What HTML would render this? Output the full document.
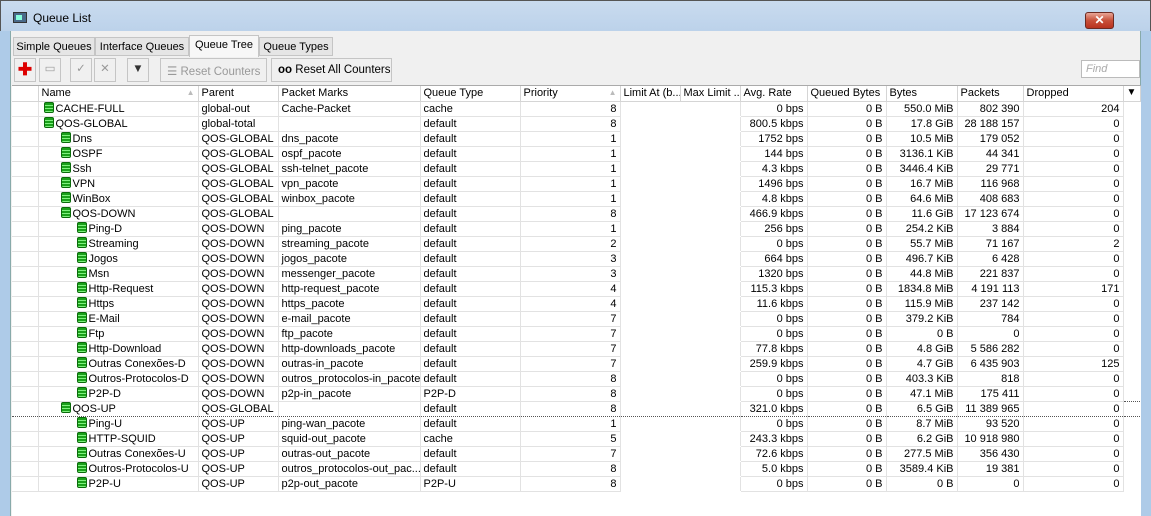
<!DOCTYPE html>
<html><head><meta charset="utf-8"><style>
*{box-sizing:border-box;margin:0;padding:0}
body{width:1151px;height:516px;overflow:hidden;background:#aecbe8;font-family:"Liberation Sans",sans-serif;font-size:11px;color:#000;position:relative}
.title{position:absolute;left:0;top:0;width:1151px;height:31px;background:linear-gradient(#c9dbef,#bcd2ea);border:1px solid #555;border-bottom:none}
.title span{position:absolute;left:32px;top:10px;font-size:12px}
.ticon{position:absolute;left:12px;top:11px;width:14px;height:11px;background:#4a6a8a;border:1px solid #333}
.ticon:after{content:"";position:absolute;left:2px;top:2px;width:6px;height:5px;background:#8fd}
.close{position:absolute;left:1084px;top:11px;width:29px;height:17px;border:1px solid #6b2a22;border-radius:3px;background:linear-gradient(#e8a596,#c8503a 50%,#b8321e);color:#fff;font-weight:bold;text-align:center;line-height:15px;font-size:12px}
.win{position:absolute;left:10px;top:31px;width:1131px;height:485px;background:#f0f0f0;border-left:1px solid #8aa;border-right:1px solid #8aa}
.tabs{position:absolute;left:2px;top:4px;height:20px}
.tab{position:absolute;top:2px;height:19px;border:1px solid #c5c5c5;background:#e5e5e5;font-size:11px;padding:3px 0 0;text-align:center;white-space:nowrap}
.tab.sel{top:0;height:22px;background:#f7f7f7;border-bottom:none;padding-top:3px}
.tb{position:absolute;top:27px;height:24px;border:1px solid #c5c5c5;background:#f0f0f0;color:#999;font-size:11.5px;padding:5px 6px 0;white-space:nowrap;text-align:center}
.find{position:absolute;left:1070px;top:29px;width:59px;height:18px;background:#fff;border:1px solid #bbb;color:#aaa;font-style:italic;padding:2px 4px}
.grid{position:absolute;left:1px;top:54px;width:1129px;height:431px;background:#fff;border-top:1px solid #aaa}
table{border-collapse:collapse;table-layout:fixed;position:absolute;left:0;top:0;width:1128px}
td{height:15px;line-height:14px;white-space:nowrap;overflow:hidden;border-right:1px solid #e2e2e2;border-bottom:1px solid #e2e2e2;padding:0 3px;font-size:11px}
tr.h td{border-right:1px solid #d5d5d5;border-bottom:1px solid #d5d5d5;height:15px}
tr:not(.h) td:nth-child(7),tr:not(.h) td:nth-child(8){border-bottom-color:#fff}
tr:not(.h) td:nth-child(7){border-right-color:#fff}
td.r{text-align:right}
td.e{border-right:none;border-bottom:none}
tr.sel td{border-top:1px dotted #555;border-bottom:1px dotted #555 !important}
.ic{display:inline-block;width:10px;height:11px;vertical-align:-1px;margin-right:2px;background:repeating-linear-gradient(#1aa01a 0 2px,#7ef07e 2px 3px);border:1px solid #0a6a0a;border-radius:2px}
</style></head><body>
<div class="title"><div class="ticon"></div><span>Queue List</span><div class="close">✕</div></div>
<div class="win">
<div class="tabs">
<div class="tab" style="left:0;width:82px">Simple Queues</div>
<div class="tab" style="left:82px;width:94px">Interface Queues</div>
<div class="tab sel" style="left:176px;width:70px">Queue Tree</div>
<div class="tab" style="left:246px;width:74px">Queue Types</div>
</div>
<div class="tb" style="left:3px;width:22px;color:#d00;font-weight:bold;font-size:17px;padding:0;line-height:21px">✚</div>
<div class="tb" style="left:28px;width:22px;padding:0;line-height:20px">▭</div>
<div class="tb" style="left:59px;width:22px;padding:0;line-height:20px">✓</div>
<div class="tb" style="left:83px;width:22px;padding:0;line-height:20px">✕</div>
<div class="tb" style="left:116px;width:22px;color:#333;padding:0;line-height:20px">▼</div>
<div class="tb" style="left:149px;width:107px">☰ Reset Counters</div>
<div class="tb" style="left:260px;width:121px;color:#000"><b>oo</b> Reset All Counters</div>
<div class="find">Find</div>
<div class="grid">
<table>
<colgroup><col style="width:26px"><col style="width:160px"><col style="width:80px"><col style="width:142px"><col style="width:100px"><col style="width:100px"><col style="width:60px"><col style="width:60px"><col style="width:67px"><col style="width:79px"><col style="width:71px"><col style="width:66px"><col style="width:100px"><col style="width:17px"></colgroup>
<tr class="h"><td></td><td>Name<span style="float:right;color:#bbb;font-size:8px">▲</span></td><td>Parent</td><td>Packet Marks</td><td>Queue Type</td><td>Priority<span style="float:right;color:#bbb;font-size:8px">▲</span></td><td>Limit At (b...</td><td>Max Limit ...</td><td>Avg. Rate</td><td>Queued Bytes</td><td>Bytes</td><td>Packets</td><td>Dropped</td><td style="font-size:10px">▼</td></tr>
<tr><td></td><td style="padding-left:5px"><i class="ic"></i>CACHE-FULL</td><td>global-out</td><td>Cache-Packet</td><td>cache</td><td class="r">8</td><td></td><td></td><td class="r">0 bps</td><td class="r">0 B</td><td class="r">550.0 MiB</td><td class="r">802 390</td><td class="r">204</td><td class="e"></td></tr>
<tr><td></td><td style="padding-left:5px"><i class="ic"></i>QOS-GLOBAL</td><td>global-total</td><td></td><td>default</td><td class="r">8</td><td></td><td></td><td class="r">800.5 kbps</td><td class="r">0 B</td><td class="r">17.8 GiB</td><td class="r">28 188 157</td><td class="r">0</td><td class="e"></td></tr>
<tr><td></td><td style="padding-left:22px"><i class="ic"></i>Dns</td><td>QOS-GLOBAL</td><td>dns_pacote</td><td>default</td><td class="r">1</td><td></td><td></td><td class="r">1752 bps</td><td class="r">0 B</td><td class="r">10.5 MiB</td><td class="r">179 052</td><td class="r">0</td><td class="e"></td></tr>
<tr><td></td><td style="padding-left:22px"><i class="ic"></i>OSPF</td><td>QOS-GLOBAL</td><td>ospf_pacote</td><td>default</td><td class="r">1</td><td></td><td></td><td class="r">144 bps</td><td class="r">0 B</td><td class="r">3136.1 KiB</td><td class="r">44 341</td><td class="r">0</td><td class="e"></td></tr>
<tr><td></td><td style="padding-left:22px"><i class="ic"></i>Ssh</td><td>QOS-GLOBAL</td><td>ssh-telnet_pacote</td><td>default</td><td class="r">1</td><td></td><td></td><td class="r">4.3 kbps</td><td class="r">0 B</td><td class="r">3446.4 KiB</td><td class="r">29 771</td><td class="r">0</td><td class="e"></td></tr>
<tr><td></td><td style="padding-left:22px"><i class="ic"></i>VPN</td><td>QOS-GLOBAL</td><td>vpn_pacote</td><td>default</td><td class="r">1</td><td></td><td></td><td class="r">1496 bps</td><td class="r">0 B</td><td class="r">16.7 MiB</td><td class="r">116 968</td><td class="r">0</td><td class="e"></td></tr>
<tr><td></td><td style="padding-left:22px"><i class="ic"></i>WinBox</td><td>QOS-GLOBAL</td><td>winbox_pacote</td><td>default</td><td class="r">1</td><td></td><td></td><td class="r">4.8 kbps</td><td class="r">0 B</td><td class="r">64.6 MiB</td><td class="r">408 683</td><td class="r">0</td><td class="e"></td></tr>
<tr><td></td><td style="padding-left:22px"><i class="ic"></i>QOS-DOWN</td><td>QOS-GLOBAL</td><td></td><td>default</td><td class="r">8</td><td></td><td></td><td class="r">466.9 kbps</td><td class="r">0 B</td><td class="r">11.6 GiB</td><td class="r">17 123 674</td><td class="r">0</td><td class="e"></td></tr>
<tr><td></td><td style="padding-left:38px"><i class="ic"></i>Ping-D</td><td>QOS-DOWN</td><td>ping_pacote</td><td>default</td><td class="r">1</td><td></td><td></td><td class="r">256 bps</td><td class="r">0 B</td><td class="r">254.2 KiB</td><td class="r">3 884</td><td class="r">0</td><td class="e"></td></tr>
<tr><td></td><td style="padding-left:38px"><i class="ic"></i>Streaming</td><td>QOS-DOWN</td><td>streaming_pacote</td><td>default</td><td class="r">2</td><td></td><td></td><td class="r">0 bps</td><td class="r">0 B</td><td class="r">55.7 MiB</td><td class="r">71 167</td><td class="r">2</td><td class="e"></td></tr>
<tr><td></td><td style="padding-left:38px"><i class="ic"></i>Jogos</td><td>QOS-DOWN</td><td>jogos_pacote</td><td>default</td><td class="r">3</td><td></td><td></td><td class="r">664 bps</td><td class="r">0 B</td><td class="r">496.7 KiB</td><td class="r">6 428</td><td class="r">0</td><td class="e"></td></tr>
<tr><td></td><td style="padding-left:38px"><i class="ic"></i>Msn</td><td>QOS-DOWN</td><td>messenger_pacote</td><td>default</td><td class="r">3</td><td></td><td></td><td class="r">1320 bps</td><td class="r">0 B</td><td class="r">44.8 MiB</td><td class="r">221 837</td><td class="r">0</td><td class="e"></td></tr>
<tr><td></td><td style="padding-left:38px"><i class="ic"></i>Http-Request</td><td>QOS-DOWN</td><td>http-request_pacote</td><td>default</td><td class="r">4</td><td></td><td></td><td class="r">115.3 kbps</td><td class="r">0 B</td><td class="r">1834.8 MiB</td><td class="r">4 191 113</td><td class="r">171</td><td class="e"></td></tr>
<tr><td></td><td style="padding-left:38px"><i class="ic"></i>Https</td><td>QOS-DOWN</td><td>https_pacote</td><td>default</td><td class="r">4</td><td></td><td></td><td class="r">11.6 kbps</td><td class="r">0 B</td><td class="r">115.9 MiB</td><td class="r">237 142</td><td class="r">0</td><td class="e"></td></tr>
<tr><td></td><td style="padding-left:38px"><i class="ic"></i>E-Mail</td><td>QOS-DOWN</td><td>e-mail_pacote</td><td>default</td><td class="r">7</td><td></td><td></td><td class="r">0 bps</td><td class="r">0 B</td><td class="r">379.2 KiB</td><td class="r">784</td><td class="r">0</td><td class="e"></td></tr>
<tr><td></td><td style="padding-left:38px"><i class="ic"></i>Ftp</td><td>QOS-DOWN</td><td>ftp_pacote</td><td>default</td><td class="r">7</td><td></td><td></td><td class="r">0 bps</td><td class="r">0 B</td><td class="r">0 B</td><td class="r">0</td><td class="r">0</td><td class="e"></td></tr>
<tr><td></td><td style="padding-left:38px"><i class="ic"></i>Http-Download</td><td>QOS-DOWN</td><td>http-downloads_pacote</td><td>default</td><td class="r">7</td><td></td><td></td><td class="r">77.8 kbps</td><td class="r">0 B</td><td class="r">4.8 GiB</td><td class="r">5 586 282</td><td class="r">0</td><td class="e"></td></tr>
<tr><td></td><td style="padding-left:38px"><i class="ic"></i>Outras Conexões-D</td><td>QOS-DOWN</td><td>outras-in_pacote</td><td>default</td><td class="r">7</td><td></td><td></td><td class="r">259.9 kbps</td><td class="r">0 B</td><td class="r">4.7 GiB</td><td class="r">6 435 903</td><td class="r">125</td><td class="e"></td></tr>
<tr><td></td><td style="padding-left:38px"><i class="ic"></i>Outros-Protocolos-D</td><td>QOS-DOWN</td><td>outros_protocolos-in_pacote</td><td>default</td><td class="r">8</td><td></td><td></td><td class="r">0 bps</td><td class="r">0 B</td><td class="r">403.3 KiB</td><td class="r">818</td><td class="r">0</td><td class="e"></td></tr>
<tr><td></td><td style="padding-left:38px"><i class="ic"></i>P2P-D</td><td>QOS-DOWN</td><td>p2p-in_pacote</td><td>P2P-D</td><td class="r">8</td><td></td><td></td><td class="r">0 bps</td><td class="r">0 B</td><td class="r">47.1 MiB</td><td class="r">175 411</td><td class="r">0</td><td class="e"></td></tr>
<tr class="sel"><td></td><td style="padding-left:22px"><i class="ic"></i>QOS-UP</td><td>QOS-GLOBAL</td><td></td><td>default</td><td class="r">8</td><td></td><td></td><td class="r">321.0 kbps</td><td class="r">0 B</td><td class="r">6.5 GiB</td><td class="r">11 389 965</td><td class="r">0</td><td class="e"></td></tr>
<tr><td></td><td style="padding-left:38px"><i class="ic"></i>Ping-U</td><td>QOS-UP</td><td>ping-wan_pacote</td><td>default</td><td class="r">1</td><td></td><td></td><td class="r">0 bps</td><td class="r">0 B</td><td class="r">8.7 MiB</td><td class="r">93 520</td><td class="r">0</td><td class="e"></td></tr>
<tr><td></td><td style="padding-left:38px"><i class="ic"></i>HTTP-SQUID</td><td>QOS-UP</td><td>squid-out_pacote</td><td>cache</td><td class="r">5</td><td></td><td></td><td class="r">243.3 kbps</td><td class="r">0 B</td><td class="r">6.2 GiB</td><td class="r">10 918 980</td><td class="r">0</td><td class="e"></td></tr>
<tr><td></td><td style="padding-left:38px"><i class="ic"></i>Outras Conexões-U</td><td>QOS-UP</td><td>outras-out_pacote</td><td>default</td><td class="r">7</td><td></td><td></td><td class="r">72.6 kbps</td><td class="r">0 B</td><td class="r">277.5 MiB</td><td class="r">356 430</td><td class="r">0</td><td class="e"></td></tr>
<tr><td></td><td style="padding-left:38px"><i class="ic"></i>Outros-Protocolos-U</td><td>QOS-UP</td><td>outros_protocolos-out_pac...</td><td>default</td><td class="r">8</td><td></td><td></td><td class="r">5.0 kbps</td><td class="r">0 B</td><td class="r">3589.4 KiB</td><td class="r">19 381</td><td class="r">0</td><td class="e"></td></tr>
<tr><td></td><td style="padding-left:38px"><i class="ic"></i>P2P-U</td><td>QOS-UP</td><td>p2p-out_pacote</td><td>P2P-U</td><td class="r">8</td><td></td><td></td><td class="r">0 bps</td><td class="r">0 B</td><td class="r">0 B</td><td class="r">0</td><td class="r">0</td><td class="e"></td></tr>
</table>
</div>
</div>
</body></html>
